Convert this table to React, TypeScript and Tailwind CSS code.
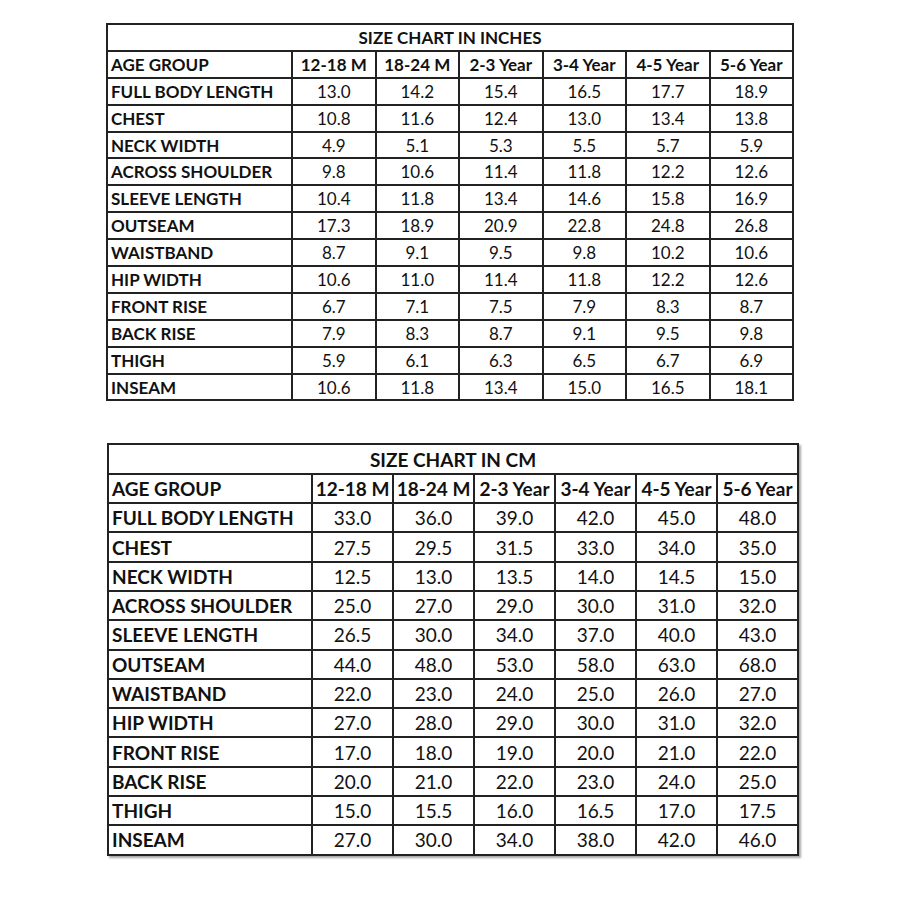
const columns = ["12-18 M", "18-24 M", "2-3 Year", "3-4 Year", "4-5 Year", "5-6 Year"];

const inches: [string, string[]][] = [
  ["FULL BODY LENGTH", ["13.0", "14.2", "15.4", "16.5", "17.7", "18.9"]],
  ["CHEST", ["10.8", "11.6", "12.4", "13.0", "13.4", "13.8"]],
  ["NECK WIDTH", ["4.9", "5.1", "5.3", "5.5", "5.7", "5.9"]],
  ["ACROSS SHOULDER", ["9.8", "10.6", "11.4", "11.8", "12.2", "12.6"]],
  ["SLEEVE LENGTH", ["10.4", "11.8", "13.4", "14.6", "15.8", "16.9"]],
  ["OUTSEAM", ["17.3", "18.9", "20.9", "22.8", "24.8", "26.8"]],
  ["WAISTBAND", ["8.7", "9.1", "9.5", "9.8", "10.2", "10.6"]],
  ["HIP WIDTH", ["10.6", "11.0", "11.4", "11.8", "12.2", "12.6"]],
  ["FRONT RISE", ["6.7", "7.1", "7.5", "7.9", "8.3", "8.7"]],
  ["BACK RISE", ["7.9", "8.3", "8.7", "9.1", "9.5", "9.8"]],
  ["THIGH", ["5.9", "6.1", "6.3", "6.5", "6.7", "6.9"]],
  ["INSEAM", ["10.6", "11.8", "13.4", "15.0", "16.5", "18.1"]],
];

const cm: [string, string[]][] = [
  ["FULL BODY LENGTH", ["33.0", "36.0", "39.0", "42.0", "45.0", "48.0"]],
  ["CHEST", ["27.5", "29.5", "31.5", "33.0", "34.0", "35.0"]],
  ["NECK WIDTH", ["12.5", "13.0", "13.5", "14.0", "14.5", "15.0"]],
  ["ACROSS SHOULDER", ["25.0", "27.0", "29.0", "30.0", "31.0", "32.0"]],
  ["SLEEVE LENGTH", ["26.5", "30.0", "34.0", "37.0", "40.0", "43.0"]],
  ["OUTSEAM", ["44.0", "48.0", "53.0", "58.0", "63.0", "68.0"]],
  ["WAISTBAND", ["22.0", "23.0", "24.0", "25.0", "26.0", "27.0"]],
  ["HIP WIDTH", ["27.0", "28.0", "29.0", "30.0", "31.0", "32.0"]],
  ["FRONT RISE", ["17.0", "18.0", "19.0", "20.0", "21.0", "22.0"]],
  ["BACK RISE", ["20.0", "21.0", "22.0", "23.0", "24.0", "25.0"]],
  ["THIGH", ["15.0", "15.5", "16.0", "16.5", "17.0", "17.5"]],
  ["INSEAM", ["27.0", "30.0", "34.0", "38.0", "42.0", "46.0"]],
];

function Chart({
  title,
  rows,
  first,
  col,
  rowClass,
  textClass,
  tableClass,
}: {
  title: string;
  rows: [string, string[]][];
  first: string;
  col: string;
  rowClass: string;
  textClass: string;
  tableClass: string;
}) {
  const cell = "border-2 border-[#222] leading-none";
  return (
    <table className={`table-fixed border-collapse text-[#111] ${textClass} ${tableClass}`}>
      <colgroup>
        <col className={first} />
        {columns.map((c) => (
          <col key={c} className={col} />
        ))}
      </colgroup>
      <tbody>
        <tr className={rowClass}>
          <td colSpan={7} className={`${cell} text-center font-bold`}>
            {title}
          </td>
        </tr>
        <tr className={rowClass}>
          <td className={`${cell} pl-[3px] font-bold`}>AGE GROUP</td>
          {columns.map((c) => (
            <td key={c} className={`${cell} text-center font-bold whitespace-nowrap`}>
              {c}
            </td>
          ))}
        </tr>
        {rows.map(([label, values]) => (
          <tr key={label} className={rowClass}>
            <td className={`${cell} pl-[3px] font-bold whitespace-nowrap`}>{label}</td>
            {values.map((v, i) => (
              <td key={i} className={`${cell} text-center`}>
                {v}
              </td>
            ))}
          </tr>
        ))}
      </tbody>
    </table>
  );
}

export default function App() {
  return (
    <div className="w-[900px] h-[900px] bg-white font-['Lato',sans-serif] pt-[23px] flex flex-col gap-[42px]">
      <div className="pl-[106px]">
        <Chart
          title="SIZE CHART IN INCHES"
          rows={inches}
          first="w-[185px]"
          col="w-[83.5px]"
          rowClass="h-[26.9px]"
          textClass="text-[17px]"
          tableClass="w-[686px]"
        />
      </div>
      <div className="pl-[107px]">
        <Chart
          title="SIZE CHART IN CM"
          rows={cm}
          first="w-[204px]"
          col="w-[81px]"
          rowClass="h-[29.3px]"
          textClass="text-[19px]"
          tableClass="w-[690px] shadow-[2px_2px_2px_rgba(0,0,0,0.35)]"
        />
      </div>
    </div>
  );
}
